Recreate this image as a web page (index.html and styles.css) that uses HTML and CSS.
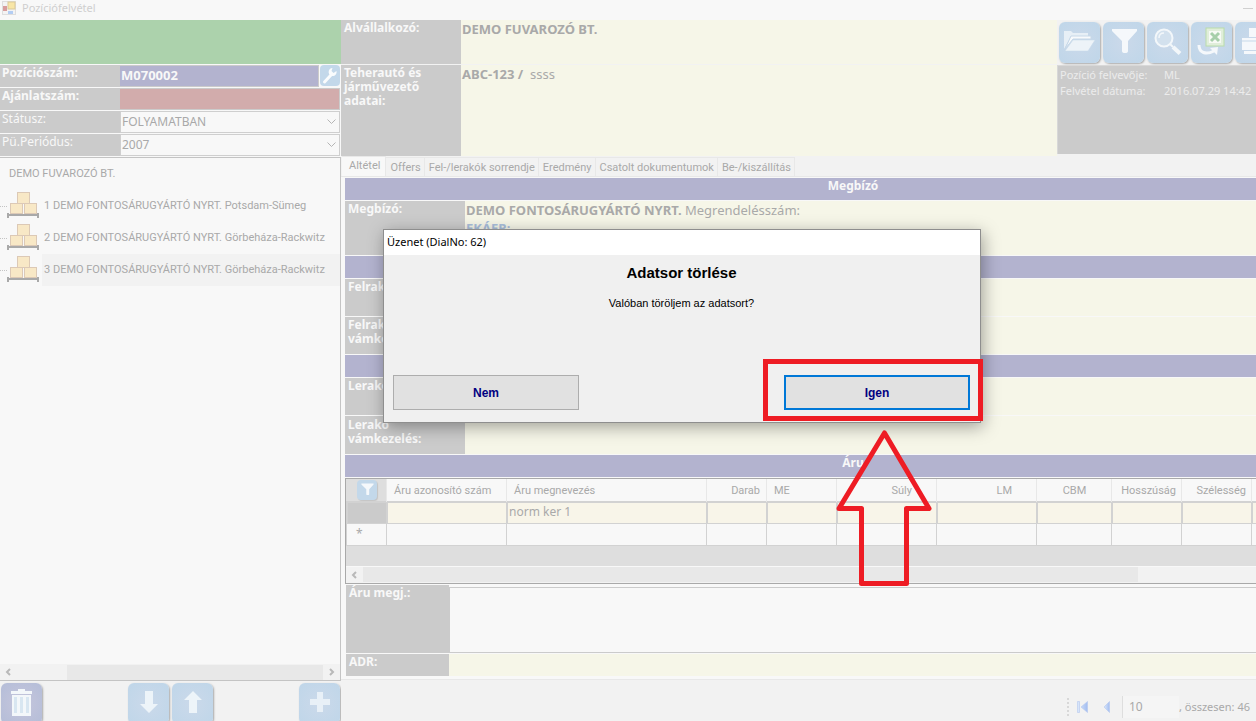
FILE: index.html
```html
<!DOCTYPE html>
<html lang="hu">
<head>
<meta charset="utf-8">
<title>Pozíciófelvétel</title>
<link rel="stylesheet" href="styles.css">
</head>
<body>
<svg class="defs" aria-hidden="true">
  <defs>
    <linearGradient id="nav"><stop offset="0" stop-color="#dce9fb"/><stop offset="1" stop-color="#a3bdf0"/></linearGradient>
    <symbol id="boxes" viewBox="0 0 32 26">
      <g fill="#f8e8c6" stroke="#dcc9b6"><rect x="10.500" y=".5" width="12" height="11"/><rect x="3.500" y="11.500" width="12" height="10"/><rect x="17.500" y="11.500" width="12" height="10"/></g>
      <path d="M0 21h2v1h28v-1h2v5h-2v-2H2v2H0z" fill="#a9a9a9"/>
    </symbol>
    <symbol id="funnel" viewBox="0 0 41 41"><path d="M9 7h25v2l-9 10v10q0 2-3 2t-3-2V19L9 9z" fill="#f5f8fb"/></symbol>
  </defs>
</svg>

<div class="app">
  <header class="titlebar">
    <svg width="14" height="14" viewBox="0 0 14 14"><rect x=".5" y=".5" width="13" height="13" fill="#f3f3f3" stroke="#dedede"/><rect x="6" y="1" width="7" height="7" fill="#f8e6a6" stroke="#dbc998"/><rect x="1" y="5" width="4" height="5" fill="#d89c9c"/><rect x="6" y="10" width="5" height="3" fill="#b3cdf3"/></svg>
    <span>Pozíciófelvétel</span>
    <i class="minimize"></i>
  </header>

  <div class="columns">
    <aside class="side">
      <div class="status-color"></div>
      <form class="facts">
        <label for="pos">Pozíciószám:</label>
        <div class="pos-line">
          <input id="pos" class="pos" value="M070002">
          <button type="button" class="wrench" aria-label="Beállítás"><svg width="20" height="21" viewBox="0 0 20 21"><path d="M4.500 17L11 10" stroke="#fafcfd" stroke-width="3" stroke-linecap="round"/><path d="M16.500 6a4 4 0 1 1-4-3l-1 3 2 2z" fill="#fafcfd"/></svg></button>
        </div>
        <label for="offer">Ajánlatszám:</label>
        <input id="offer" class="offer">
        <label for="stat" class="light">Státusz:</label>
        <div class="drop"><select id="stat"><option>FOLYAMATBAN</option></select><svg width="9" height="6" viewBox="0 0 9 6"><path d="M.5.5l4 4 4-4" fill="none" stroke="#b5b5b5"/></svg></div>
        <label for="per" class="light">Pü.Periódus:</label>
        <div class="drop"><select id="per"><option>2007</option></select><svg width="9" height="6" viewBox="0 0 9 6"><path d="M.5.5l4 4 4-4" fill="none" stroke="#b5b5b5"/></svg></div>
      </form>
      <div class="tree">
        <ul>
          <li class="root">DEMO FUVAROZÓ BT.</li>
          <li><i></i><svg width="32" height="26"><use href="#boxes"/></svg><span>1 DEMO FONTOSÁRUGYÁRTÓ NYRT. Potsdam-Sümeg</span></li>
          <li><i></i><svg width="32" height="26"><use href="#boxes"/></svg><span>2 DEMO FONTOSÁRUGYÁRTÓ NYRT. Görbeháza-Rackwitz</span></li>
          <li class="current"><i></i><svg width="32" height="26"><use href="#boxes"/></svg><span>3 DEMO FONTOSÁRUGYÁRTÓ NYRT. Görbeháza-Rackwitz</span></li>
        </ul>
        <div class="hscroll">
          <svg width="6" height="8" viewBox="0 0 6 8"><path d="M5 1L2 4l3 3" fill="none" stroke="#b9b9b9" stroke-width="2"/></svg>
          <b></b>
          <svg width="6" height="8" viewBox="0 0 6 8"><path d="M1 1l3 3-3 3" fill="none" stroke="#b9b9b9" stroke-width="2"/></svg>
        </div>
      </div>
      <div class="side-tools">
        <button class="tile bin" aria-label="Törlés"><svg width="41" height="41" viewBox="0 0 41 41"><path d="M10 8h21v3H10zM17 6h7v2h-7z" fill="#f3f7fa"/><path d="M11 12h19v21H11z" fill="#f3f7fa"/><path d="M13 14h3v16h-3zM19 14h3v16h-3zM25 14h3v16h-3z" fill="#d8e6f1"/></svg></button>
        <button class="tile down" aria-label="Le"><svg width="41" height="41" viewBox="0 0 41 41"><path d="M17 8h8v13h5l-9 9-9-9h5z" fill="#edf4f9"/></svg></button>
        <button class="tile" aria-label="Fel"><svg width="41" height="41" viewBox="0 0 41 41"><path d="M17 30h8V17h5l-9-9-9 9h5z" fill="#edf4f9"/></svg></button>
        <button class="tile plus" aria-label="Új"><svg width="41" height="41" viewBox="0 0 41 41"><path d="M18 9h6v7h7v6h-7v7h-6v-7h-7v-6h7z" fill="#e8f0f7"/></svg></button>
      </div>
    </aside>

    <main class="main">
      <section class="carrier">
        <dl class="carrier-data">
          <dt>Alvállalkozó:</dt><dd><strong>DEMO FUVAROZÓ BT.</strong></dd>
          <dt>Teherautó és járművezető adatai:</dt><dd><strong>ABC-123 /</strong>&nbsp; ssss</dd>
        </dl>
        <div class="carrier-side">
          <div class="toolbar">
            <button class="tile" aria-label="Megnyitás"><svg width="41" height="41" viewBox="0 0 41 41"><path d="M5 27V9h7l2 2h15v3H12z" fill="#e7eff6"/><path d="M6 27l6-13h20v3H14z" fill="#f8fafc" stroke="#c7d8e8"/><path d="M6 29l8-11h22l-7 11z" fill="#edf3f8" stroke="#c7d8e8" stroke-width=".5"/></svg></button>
            <button class="tile" aria-label="Szűrő"><svg width="41" height="41"><use href="#funnel"/></svg></button>
            <button class="tile" aria-label="Keresés"><svg width="41" height="41" viewBox="0 0 41 41"><circle cx="17" cy="16" r="8.500" fill="#d3e1ee" stroke="#f3f7fa" stroke-width="2"/><path d="M12 16q0-5 5-5" fill="none" stroke="#f3f7fa" stroke-width="1.500"/><path d="M23 22l3 3" stroke="#f3f7fa" stroke-width="2"/><path d="M26 25l7 6.500" stroke="#f3f7fa" stroke-width="4"/></svg></button>
            <button class="tile" aria-label="Excel"><svg width="41" height="41" viewBox="0 0 41 41"><rect x="15" y="6" width="18" height="18" fill="#e0eeda" stroke="#b9dcaa"/><rect x="18" y="9" width="12" height="12" fill="#f7faf5"/><path d="M20 11l8 8M28 11l-8 8" stroke="#a7cfaa" stroke-width="3"/><path d="M8 23c0 8 7 10 15 6" fill="none" stroke="#f5f8fb" stroke-width="3"/><path d="M19 26l8-1-1 8z" fill="#f5f8fb"/></svg></button>
            <button class="tile" aria-label="Nyomtatás"><svg width="41" height="41" viewBox="0 0 41 41"><path d="M14 6h16v9H14zM7 16h28v12H7zM9 29h24v3H9z" fill="#f5f8fb"/><path d="M7 19h28" stroke="#c7d9e9"/></svg></button>
          </div>
          <dl class="record">
            <dt>Pozíció felvevője:</dt><dd>ML</dd>
            <dt>Felvétel dátuma:</dt><dd>2016.07.29 14:42</dd>
          </dl>
        </div>
      </section>

      <nav class="tabs">
        <a href="#" class="active">Altétel</a><a href="#">Offers</a><a href="#">Fel-/lerakók sorrendje</a><a href="#">Eredmény</a><a href="#">Csatolt dokumentumok</a><a href="#">Be-/kiszállítás</a>
      </nav>

      <div class="viewport">
        <div class="page">
          <h2>Megbízó</h2>
          <div class="pair client"><div class="name">Megbízó:</div><div class="value"><strong>DEMO FONTOSÁRUGYÁRTÓ NYRT.</strong> Megrendelésszám:<br><a href="#">EKÁER:</a></div></div>
          <h2>Felrakó</h2>
          <div class="pair"><div class="name">Felrakó:</div><div class="value"></div></div>
          <div class="pair"><div class="name">Felrakó vámkezelés:</div><div class="value"></div></div>
          <h2>Lerakó</h2>
          <div class="pair"><div class="name">Lerakó:</div><div class="value"></div></div>
          <div class="pair last"><div class="name">Lerakó vámkezelés:</div><div class="value"></div></div>
          <h2>Áru</h2>
          <div class="grid">
            <table>
              <colgroup><col class="w40"><col class="w120"><col class="w200"><col class="w60"><col class="w70"><col class="w100"><col class="w100"><col class="w75"><col class="w70"><col class="w70"><col></colgroup>
              <thead><tr><th class="corner"><button class="mini" aria-label="Szűrő"><svg width="20" height="20"><use href="#funnel"/></svg></button></th><th>Áru azonosító szám</th><th>Áru megnevezés</th><th class="num">Darab</th><th>ME</th><th class="num">Súly</th><th class="num">LM</th><th class="mid">CBM</th><th class="late">Hosszúság</th><th class="late">Szélesség</th><th></th></tr></thead>
              <tbody>
                <tr class="filled"><td class="sel"></td><td></td><td>norm ker 1</td><td></td><td></td><td></td><td></td><td></td><td></td><td></td><td></td></tr>
                <tr class="new"><td>*</td><td></td><td></td><td></td><td></td><td></td><td></td><td></td><td></td><td></td><td></td></tr>
              </tbody>
            </table>
            <div class="grid-scroll"><svg width="6" height="8" viewBox="0 0 6 8"><path d="M5 1L2 4l3 3" fill="none" stroke="#b9b9b9" stroke-width="2"/></svg><b></b></div>
          </div>
          <div class="note"><label for="note">Áru megj.:</label><textarea id="note"></textarea></div>
          <div class="note adr"><label for="adr">ADR:</label><input id="adr"></div>
        </div>
      </div>

      <footer class="pager">
        <i class="grip"></i>
        <button aria-label="Első"><svg width="11" height="12" viewBox="0 0 11 12"><path d="M.5.5h2v11h-2zM10.500.5v11L4 6z" fill="url(#nav)" stroke="#b5c8ee" stroke-width=".6"/></svg></button>
        <button aria-label="Előző"><svg width="11" height="12" viewBox="0 0 11 12"><path d="M8.500.5v11L3 6z" fill="url(#nav)" stroke="#b5c8ee" stroke-width=".6"/></svg></button>
        <input aria-label="Oldal" value="10">
        <span>, összesen: 46</span>
      </footer>
    </main>
  </div>
</div>

<div class="dialog" role="dialog" aria-labelledby="dlg-title">
  <div class="dialog-bar" id="dlg-title">Üzenet (DialNo: 62)</div>
  <div class="dialog-body">
    <h1>Adatsor törlése</h1>
    <p>Valóban töröljem az adatsort?</p>
    <div class="choices"><button>Nem</button><button class="default">Igen</button></div>
  </div>
  <div class="marker"></div>
  <svg class="arrow" width="98" height="160" viewBox="0 0 98 160"><path d="M49.500 5L94 80.500H71.500V155.500H26.500V80.500H4z" fill="none" stroke="#ee1c24" stroke-width="5" stroke-linejoin="round"/></svg>
</div>
</body>
</html>
```

FILE: styles.css
```css
* { box-sizing: border-box; }
body {
  margin: 0;
  background: #f2f2f2;
  color: #a9a9a9;
  font: 12px/14px "Noto Sans", sans-serif;
  overflow: hidden;
}
button, input, select, textarea {
  margin: 0;
  padding: 0;
  border: 0;
  border-radius: 0;
  background: none;
  color: inherit;
  font: inherit;
  appearance: none;
}
dl, dd, ul, h1, h2, p { margin: 0; padding: 0; }
a { color: inherit; text-decoration: none; }
.defs { position: absolute; width: 0; height: 0; }

.app { display: flex; flex-direction: column; height: 100vh; }
.titlebar {
  display: flex;
  align-items: center;
  gap: 6px;
  height: 20px;
  padding: 0 3px 4px 2px;
  background: #f8f8f8;
  color: #cfcfcf;
  font-size: 11px;
}
.minimize { width: 10px; height: 1px; margin-left: auto; background: #d0d0d0; }
.columns { flex: 1; display: flex; min-height: 0; }

/* Left column */
.side { width: 341px; flex: none; display: flex; flex-direction: column; }
.status-color { height: 44px; background: #acd2ac; }
.facts {
  display: grid;
  grid-template-columns: 120px 1fr;
  grid-auto-rows: 22px;
  row-gap: 1px;
  padding: 1px 1px 1px 0;
  background: #f8f8f8;
}
.facts label { padding: 1px 2px; background: #cbcbcb; color: #f8f8f8; font-weight: 700; }
.facts .light { font-weight: 400; }
.pos-line { display: flex; gap: 1px; min-width: 0; }
.pos {
  flex: 1;
  min-width: 0;
  padding: 0 1px 3px;
  border: solid #cbcbcb;
  border-width: 1px 1px 1px 0;
  background: #b3b3cf;
  color: #f8f8f8;
  font-size: 13px;
  font-weight: 700;
}
.wrench { width: 20px; height: 21px; border-radius: 4px; background: #c3d8ea; }
.wrench svg { display: block; }
.offer { border: 1px solid #cbcbcb; border-left: 0; background: #d2acac; }
.drop {
  display: flex;
  align-items: center;
  padding-right: 3px;
  border: 1px solid #cfcfcf;
  background: #f8f8f8;
}
.drop select { flex: 1; height: 20px; padding-left: 1px; }

.tree {
  flex: 1;
  display: flex;
  flex-direction: column;
  overflow: hidden;
  border: solid #c4c4c4;
  border-width: 1px 1px 1px 0;
  background: #f8f8f8;
  font: 11px/14px Roboto, "Liberation Sans", sans-serif;
}
.tree ul { flex: 1; list-style: none; }
.tree li { display: flex; align-items: center; height: 32px; }
.tree li i { flex: none; width: 7px; border-top: 1px dotted #c4c4c4; }
.tree li svg { flex: none; margin-bottom: 2px; }
.tree li span { flex: 1; margin-left: 3px; padding-left: 2px; line-height: 32px; white-space: nowrap; }
.tree .root { padding-left: 9px; }
.tree .current span { background: #f2f2f2; }
.hscroll { display: flex; align-items: center; height: 16px; padding: 0 5px; background: #f2f2f2; }
.hscroll b { width: 256px; height: 15px; margin: 0 6px 0 auto; background: #e8e8e8; }
.side-tools { display: flex; height: 40px; padding: 2px 0 0 1px; overflow: hidden; }
.side-tools .down { margin-left: 83px; }
.side-tools .plus { margin-left: auto; margin-right: 1px; }

.tile {
  flex: none;
  width: 41px;
  height: 41px;
  margin-right: 3px;
  border-radius: 6px;
  background: radial-gradient(#cbd9ea, #bfd6e9);
  box-shadow: 1px 1px 2px #a8a8a8;
}
.tile svg { display: block; }
.tile.bin { background: radial-gradient(#c6c6dc, #b4bdd8); }

/* Right column */
.main { flex: 1; min-width: 0; display: flex; flex-direction: column; }
.carrier { display: flex; overflow: hidden; }
.carrier-data {
  flex: 1;
  display: grid;
  grid-template-columns: 120px 1fr;
  grid-template-rows: 44px 91px;
  row-gap: 1px;
}
.carrier-data dt, .name, .note label { padding: 1px 3px; background: #cbcbcb; color: #f8f8f8; font-weight: 700; }
.carrier-data dd, .value { padding: 1px; background: #f6f6e8; font-size: 13px; line-height: 16px; }
.carrier-side { width: 199px; flex: none; display: flex; flex-direction: column; }
.toolbar { display: flex; height: 45px; padding: 2px 0 0 2px; overflow: hidden; }
.record {
  flex: 1;
  display: grid;
  grid-template-columns: 104px 1fr;
  grid-auto-rows: 16px;
  margin-bottom: 2px;
  padding: 1px 2px;
  border: solid #d8d8d8;
  border-width: 1px 0 0 1px;
  background: #cbcbcb;
  color: #ececec;
  font-size: 11px;
  line-height: 16px;
  white-space: nowrap;
}

.tabs {
  display: flex;
  align-items: flex-end;
  height: 21px;
  padding-left: 1px;
  border-bottom: 1px solid #e8e8e8;
  font: 11px/16px Roboto, "Liberation Sans", sans-serif;
}
.tabs a { padding: 2px 3px 0 4px; border: solid #e8e8e8; border-width: 1px 1px 0 0; }
.tabs .active { padding: 1px 5px 2px 7px; background: #f8f8f8; }

.viewport {
  flex: 1;
  overflow: hidden;
  padding: 1px 0 2px 4px;
  border-bottom: 1px solid #e8e8e8;
  background: #f8f8f8;
}
/* The page is wider than the window and runs on past its right edge. */
.page { display: flex; flex-direction: column; gap: 1px; margin-right: -105px; }
.page h2 {
  height: 22px;
  padding-top: 1px;
  background: #b3b3cf;
  color: #f8f8f8;
  font-size: 12px;
  line-height: 14px;
  text-align: center;
}
.pair { display: grid; grid-template-columns: 120px 1fr; height: 37px; }
.pair.last { height: 38px; }
.pair.last .name { padding-top: 2px; }
.pair.client { height: 54px; }
.client .value { line-height: 18px; padding-top: 0; }
.value a { color: #a9bedb; font-weight: 700; }

.grid { height: 106px; border: solid #a9a9a9; border-width: 1px 0 1px 1px; background: #dedede; }
.grid table { width: 100%; table-layout: fixed; border-collapse: collapse; }
.w40 { width: 40px; }
.w60 { width: 60px; }
.w70 { width: 70px; }
.w75 { width: 75px; }
.w100 { width: 100px; }
.w120 { width: 120px; }
.w200 { width: 200px; }
.grid th {
  height: 22px;
  padding: 2px 6px 0 7px;
  border-right: 1px solid #e8e8e8;
  background: #f8f8f8;
  font: 11px/14px Roboto, "Liberation Sans", sans-serif;
  text-align: left;
  white-space: nowrap;
}
.grid .corner { padding: 0 10px; background: #dedede; }
.grid .num { padding-right: 24px; text-align: right; }
.grid .num:nth-child(4) { padding-right: 6px; }
.grid .mid { text-align: center; }
.grid .late { padding-right: 5px; text-align: right; }
.mini { display: block; width: 20px; height: 20px; border-radius: 4px; background: #c3d8ea; box-shadow: 1px 1px 1px #c4c4c4; }
.mini svg { display: block; }
.grid td { height: 22px; padding: 0 2px; border: 1px solid #d2d2d2; background: #f8f8f8; }
.grid .filled td { background: #f8f5e9; box-shadow: inset 1px 1px #d2d2d2; }
.grid .filled .sel { background: #cbcbcb; }
.grid .new td:first-child { padding-left: 9px; }
.grid-scroll { display: flex; align-items: center; height: 17px; margin-top: 20px; padding-left: 5px; border-top: 1px solid #f8f8f8; background: #f2f2f2; }
.grid-scroll b { width: 775px; height: 15px; margin-left: 6px; background: #e8e8e8; }

.note { display: grid; grid-template-columns: 103px 1fr; height: 68px; padding-left: 1px; }
.note textarea { margin-top: 2px; border: 1px solid #cbcbcb; background: #f8f8f8; resize: none; }
.note input { background: #f6f6e8; }
.note.adr { height: 22px; }

.pager { display: flex; align-items: center; height: 41px; padding: 12px 6px 0 0; justify-content: flex-end; }
.pager button { width: 24px; height: 24px; }
.pager svg { display: block; margin: 0 auto; }
.pager input { width: 57px; height: 22px; margin-left: 3px; padding-left: 6px; border-left: 1px solid #dedede; background: #f5f5f5; }
.pager span { font-size: 11px; }
.grip { width: 2px; height: 18px; margin-right: 2px; border-left: 2px dotted #d8d8d8; }

/* Confirmation window */
.dialog {
  position: absolute;
  left: 383px;
  top: 229px;
  width: 598px;
  border: 1px solid #8e8e8e;
  background: #f0f0f0;
  color: #000;
  box-shadow: 2px 4px 16px rgba(0, 0, 0, .35);
}
.dialog-bar { height: 25px; padding: 4px 3px; background: #fff; line-height: 16px; font-size: 11px; }
.dialog-body { padding: 9px 10px 12px 9px; text-align: center; font: 11px/14px "Liberation Sans", sans-serif; }
.dialog h1 { font: 700 15px/18px "Liberation Sans", sans-serif; }
.dialog p { margin: 14px 0 65px; }
.choices { display: flex; justify-content: space-between; }
.choices button {
  width: 186px;
  height: 35px;
  border: 1px solid #adadad;
  background: #e1e1e1;
  color: #000080;
  font: 700 12px/14px "Liberation Sans", sans-serif;
}
.choices .default { border: 2px solid #0078d7; }
.marker { position: absolute; left: 379px; top: 129px; width: 220px; height: 62px; border: 5px solid #ee1c24; }
.arrow { position: absolute; left: 451px; top: 198px; }
```
